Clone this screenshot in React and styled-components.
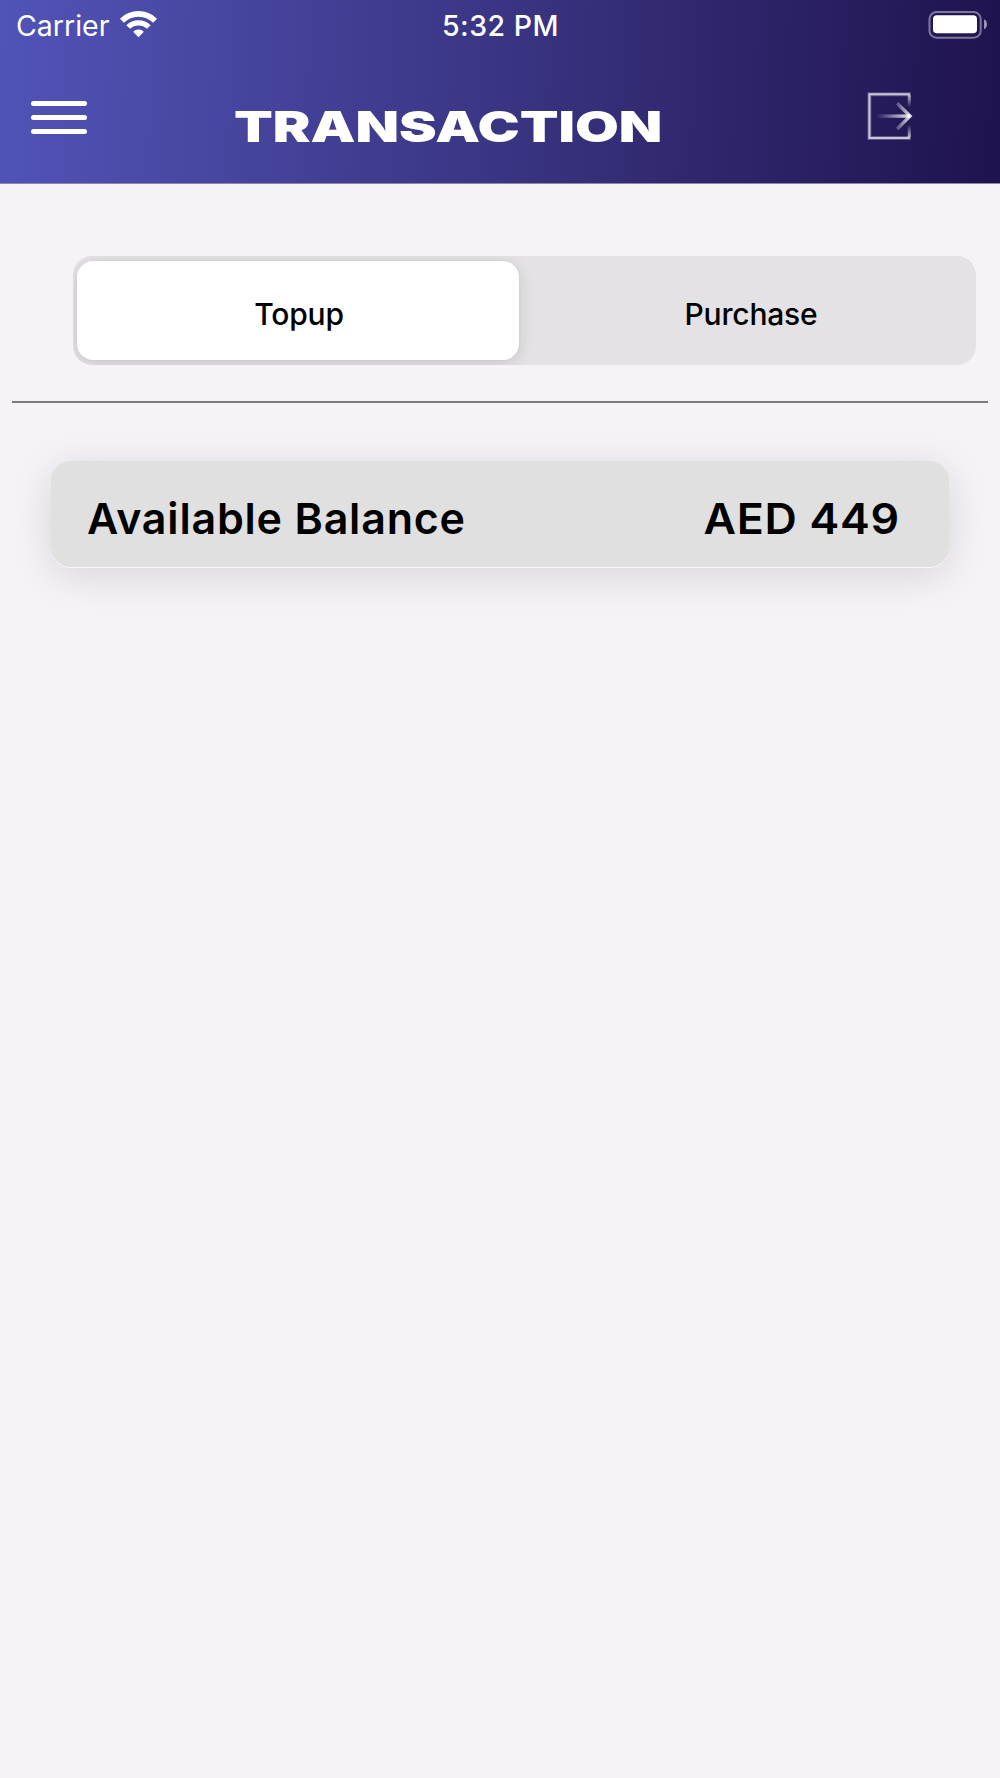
import React from "react";
import styled, { createGlobalStyle } from "styled-components";

const GlobalStyle = createGlobalStyle`
  * {
    box-sizing: border-box;
  }
  body {
    margin: 0;
    background: #f5f3f7;
    font-family: Inter, "Liberation Sans", sans-serif;
  }
`;

const segments = ["Topup", "Purchase"];

export default function App() {
  return (
    <Screen>
      <GlobalStyle />
      <Header>
        <StatusBar>
          <Network>
            <Carrier>Carrier</Carrier>
            <WifiIcon />
          </Network>
          <Clock>5:32 PM</Clock>
          <Battery>
            <BatteryIcon />
          </Battery>
        </StatusBar>
        <NavBar>
          <MenuButton aria-label="Menu">
            <MenuLine />
            <MenuLine />
            <MenuLine />
          </MenuButton>
          <Title>TRANSACTION</Title>
          <LogoutButton aria-label="Log out">
            <LogoutIcon />
          </LogoutButton>
        </NavBar>
      </Header>
      <SegmentedControl>
        {segments.map((label, i) => (
          <Segment key={label} $active={i === 0}>
            {label}
          </Segment>
        ))}
      </SegmentedControl>
      <Divider />
      <BalanceCard>
        <BalanceLabel>Available Balance</BalanceLabel>
        <Amount>AED 449</Amount>
      </BalanceCard>
    </Screen>
  );
}

function WifiIcon() {
  return (
    <svg width="37" height="28" viewBox="0 0 37 28" fill="none">
      <path d="M1.9 10.7a23.6 23.6 0 0 1 33.2 0" stroke="#fff" strokeWidth="5.6" />
      <path d="M8.2 17a14.7 14.7 0 0 1 20.6 0" stroke="#fff" strokeWidth="5.2" />
      <path d="M18.5 27.2l-5.4-5.5a7.8 7.8 0 0 1 10.8 0z" fill="#fff" />
    </svg>
  );
}

function BatteryIcon() {
  return (
    <svg width="60" height="28" viewBox="0 0 60 28" fill="none">
      <rect x="1.5" y="1.1" width="51.2" height="25.6" rx="7" stroke="#fff" strokeOpacity="0.42" strokeWidth="2" />
      <rect x="5" y="4.2" width="44" height="18" rx="3.8" fill="#fff" />
      <path d="M56 8.3c4 1.8 4 8.2 0 10z" fill="#fff" fillOpacity="0.55" />
    </svg>
  );
}

function LogoutIcon() {
  return (
    <svg width="48" height="52" viewBox="0 0 48 52" fill="none">
      <defs>
        <linearGradient id="shaft" gradientUnits="userSpaceOnUse" x1="10" y1="0" x2="44" y2="0">
          <stop offset="0" stopColor="#fff" stopOpacity="0" />
          <stop offset="1" stopColor="#fff" stopOpacity="0.9" />
        </linearGradient>
        <linearGradient id="head" gradientUnits="userSpaceOnUse" x1="29" y1="0" x2="44" y2="0">
          <stop offset="0" stopColor="#fff" stopOpacity="0.15" />
          <stop offset="1" stopColor="#fff" stopOpacity="0.85" />
        </linearGradient>
        <linearGradient id="upper" gradientUnits="userSpaceOnUse" x1="0" y1="4" x2="0" y2="17">
          <stop offset="0" stopColor="#fff" stopOpacity="0.75" />
          <stop offset="1" stopColor="#fff" stopOpacity="0" />
        </linearGradient>
        <linearGradient id="lower" gradientUnits="userSpaceOnUse" x1="0" y1="48" x2="0" y2="35">
          <stop offset="0" stopColor="#fff" stopOpacity="0.75" />
          <stop offset="1" stopColor="#fff" stopOpacity="0" />
        </linearGradient>
      </defs>
      <path d="M44.7 4.3H3.4v43.6h41.3" stroke="#fff" strokeOpacity="0.25" strokeWidth="4" />
      <path d="M44 4.3H3.4v43.6H44" stroke="#fff" strokeOpacity="0.68" strokeWidth="2" />
      <path d="M43.3 5.3V17" stroke="url(#upper)" strokeWidth="3" />
      <path d="M43.3 46.9V35" stroke="url(#lower)" strokeWidth="3" />
      <rect x="10" y="24.4" width="34" height="3.4" fill="url(#shaft)" />
      <path d="M31 13.2l13 12.9-13 12.9" stroke="url(#head)" strokeWidth="3.4" />
    </svg>
  );
}

const Screen = styled.div`
  min-height: 1778px;
  display: flex;
  flex-direction: column;
  background: #f5f3f7;
`;

const Header = styled.header`
  height: 184px;
  border-bottom: 1px solid #8c88a8;
  background: linear-gradient(92deg, #5153b7 0%, #3a3583 50%, #1f134e 100%);
  color: #fff;
`;

const StatusBar = styled.div`
  height: 50px;
  padding: 0 12px 0 16px;
  display: grid;
  grid-template-columns: 1fr auto 1fr;
`;

const Network = styled.div`
  display: flex;
  gap: 11px;
  padding-top: 10px;
`;

const Carrier = styled.span`
  width: 93px;
  font-size: 28.5px;
  line-height: 31px;
  white-space: nowrap;
`;

const Clock = styled.span`
  margin-left: -3px;
  padding-top: 10px;
  font-size: 28.5px;
  font-weight: 500;
  line-height: 31px;
  letter-spacing: 0.5px;
  white-space: nowrap;
`;

const Battery = styled.div`
  display: flex;
  justify-content: flex-end;
  padding-top: 11px;
`;

const NavBar = styled.div`
  height: 133px;
  padding: 0 86px 0 31px;
  display: flex;
  align-items: flex-start;
`;

const MenuButton = styled.button`
  margin-top: 51px;
  padding: 0;
  border: none;
  background: none;
  display: flex;
  flex-direction: column;
  gap: 9px;
`;

const MenuLine = styled.span`
  width: 56px;
  height: 5px;
  border-radius: 3px;
  background: #fff;
`;

const Title = styled.h1`
  width: 424px;
  margin: 51px 0 0 147px;
  font-size: 42.6px;
  font-weight: 900;
  line-height: 52px;
  white-space: nowrap;
  transform: scaleX(1.328);
  transform-origin: left;
`;

const LogoutButton = styled.button`
  margin: 40px 0 0 auto;
  padding: 0;
  border: none;
  background: none;
  display: flex;
`;

const SegmentedControl = styled.div`
  height: 109px;
  margin: 72px 24px 0 73px;
  padding: 5px 5px 5px 4px;
  display: flex;
  gap: 10px;
  border-radius: 19px;
  background: #e4e2e5;
  overflow: hidden;
`;

const Segment = styled.button`
  flex: 1;
  padding: 7px 0 0 2px;
  border: none;
  border-radius: 16px;
  background: ${props => (props.$active ? "#fff" : "transparent")};
  box-shadow: ${props =>
    props.$active ? "0 0 3px rgba(0, 0, 0, 0.06), 0 3px 16px rgba(0, 0, 0, 0.12)" : "none"};
  color: #000;
  font-family: inherit;
  font-size: 30px;
  font-weight: 500;
  letter-spacing: -0.2px;
`;

const Divider = styled.hr`
  width: 976px;
  height: 2px;
  margin: 36px 12px 0;
  border: none;
  background: #7b7b7d;
`;

const BalanceCard = styled.section`
  height: 106px;
  margin: 58px 51px 0;
  padding: 7px 49px 0 36px;
  display: flex;
  align-items: center;
  justify-content: space-between;
  border-radius: 20px;
  background: #e0e0e0;
  box-shadow: 0 1px 0 #f8f8f8, 0 8px 40px rgba(0, 0, 0, 0.13);
`;

const BalanceLabel = styled.span`
  font-size: 43px;
  font-weight: 600;
  letter-spacing: 0.8px;
  white-space: nowrap;
`;

const Amount = styled(BalanceLabel)`
  letter-spacing: 0.7px;
  transform: scaleX(1.04);
  transform-origin: right;
`;
